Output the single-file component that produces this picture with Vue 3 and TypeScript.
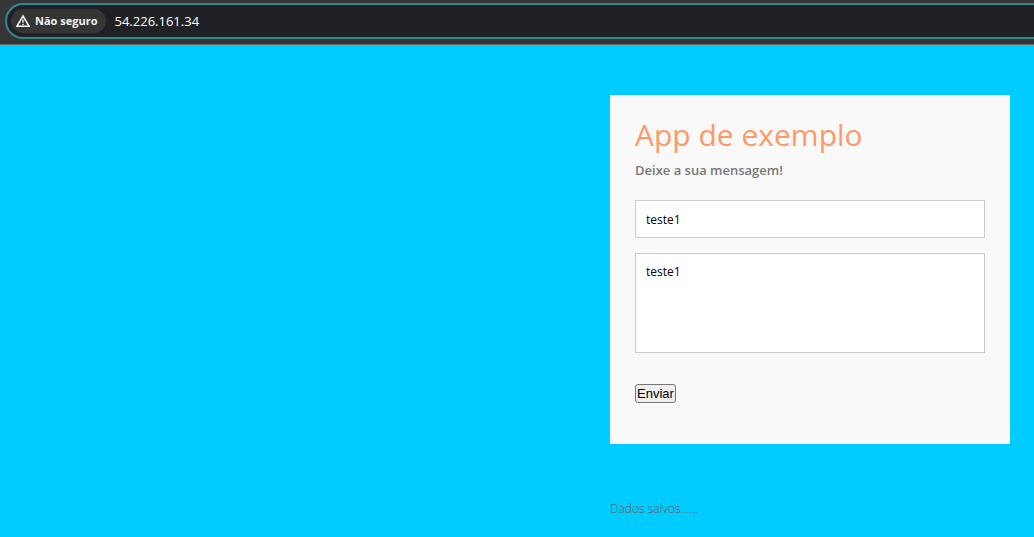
<script setup lang="ts">
import { ref } from 'vue'

const address = ref('54.226.161.34')
const name = ref('teste1')
const message = ref('teste1')
const status = ref('Dados salvos......')
</script>

<template>
  <div class="window">
    <header class="toolbar">
      <div class="omnibox">
        <button class="security" type="button">
          <svg class="warning" viewBox="0 0 14 14" aria-hidden="true">
            <path d="M7 2 L13 12.2 H1 Z" fill="none" stroke="currentColor" stroke-width="1.6" />
            <path d="M7 5.5 V8.8 M7 9.8 V11.2" stroke="currentColor" stroke-width="1.3" />
          </svg>
          <span>Não seguro</span>
        </button>
        <input v-model="address" class="address" type="text" aria-label="Endereço" />
      </div>
    </header>

    <main class="page">
      <div class="container">
        <form class="contact" @submit.prevent>
          <h3>App de exemplo</h3>
          <h4>Deixe a sua mensagem!</h4>
          <input v-model="name" class="field" type="text" aria-label="Nome" />
          <textarea v-model="message" class="field message" aria-label="Mensagem"></textarea>
          <button class="submit" type="submit">Enviar</button>
        </form>
        <p class="status">{{ status }}</p>
      </div>
    </main>
  </div>
</template>

<style>
body {
  margin: 0;
  background: #00ccff;
}
</style>

<style scoped>
* {
  box-sizing: border-box;
}

.window {
  overflow: hidden;
}

.toolbar {
  padding: 3px 0 5px 5px;
  background: #353535;
  border-bottom: 1px solid #6b6666;
}

.omnibox {
  display: flex;
  align-items: center;
  gap: 8px;
  height: 36px;
  padding-left: 4px;
  background: #202124;
  border: 2px solid #33868d;
  border-right: 0;
  border-radius: 18px 0 0 18px;
}

.security {
  display: flex;
  flex: none;
  align-items: center;
  gap: 5px;
  height: 24px;
  padding: 0 9px 0 5px;
  color: #f4f4f4;
  background: #353535;
  border: 0;
  border-radius: 12px;
  font: 700 11px/24px "Open Sans", sans-serif;
}

.warning {
  width: 14px;
  height: 14px;
}

.address {
  flex: 1;
  min-width: 0;
  padding: 0;
  color: #fff;
  background: transparent;
  border: 0;
  outline: 0;
  font: 13px/20px "Open Sans", sans-serif;
}

.page {
  padding: 50px 24px 0;
  color: #777;
  font: 400 12px/30px "Open Sans", sans-serif;
}

.container {
  max-width: 400px;
  margin-left: auto;
}

.contact {
  display: flex;
  flex-direction: column;
  align-items: flex-start;
  padding: 25px 25px 41px;
  background: #f9f9f9;
}

h3 {
  margin: 0 0 5px;
  color: #ff9966;
  font-size: 30px;
  font-weight: 400;
  line-height: 30px;
}

h4 {
  margin: 0 0 15px;
  font-size: 13px;
  font-weight: 600;
}

.field {
  width: 100%;
  height: 38px;
  margin: 0 0 15px;
  padding: 10px;
  color: #000;
  background: #fff;
  border: 1px solid #ccc;
  border-radius: 0;
  outline: 0;
  font: 400 12px/16px "Open Sans", sans-serif;
}

.message {
  height: 100px;
  margin-bottom: 31px;
  resize: none;
}

.submit {
  height: 19px;
  padding: 0 1px;
  color: #000;
  background: #efefef;
  border: 1px solid #767676;
  border-radius: 3px;
  font: 13px/17px "Liberation Sans", Arial, sans-serif;
}

.status {
  margin: 50px 0 0;
  color: #6b5555;
  font-weight: 300;
}
</style>
